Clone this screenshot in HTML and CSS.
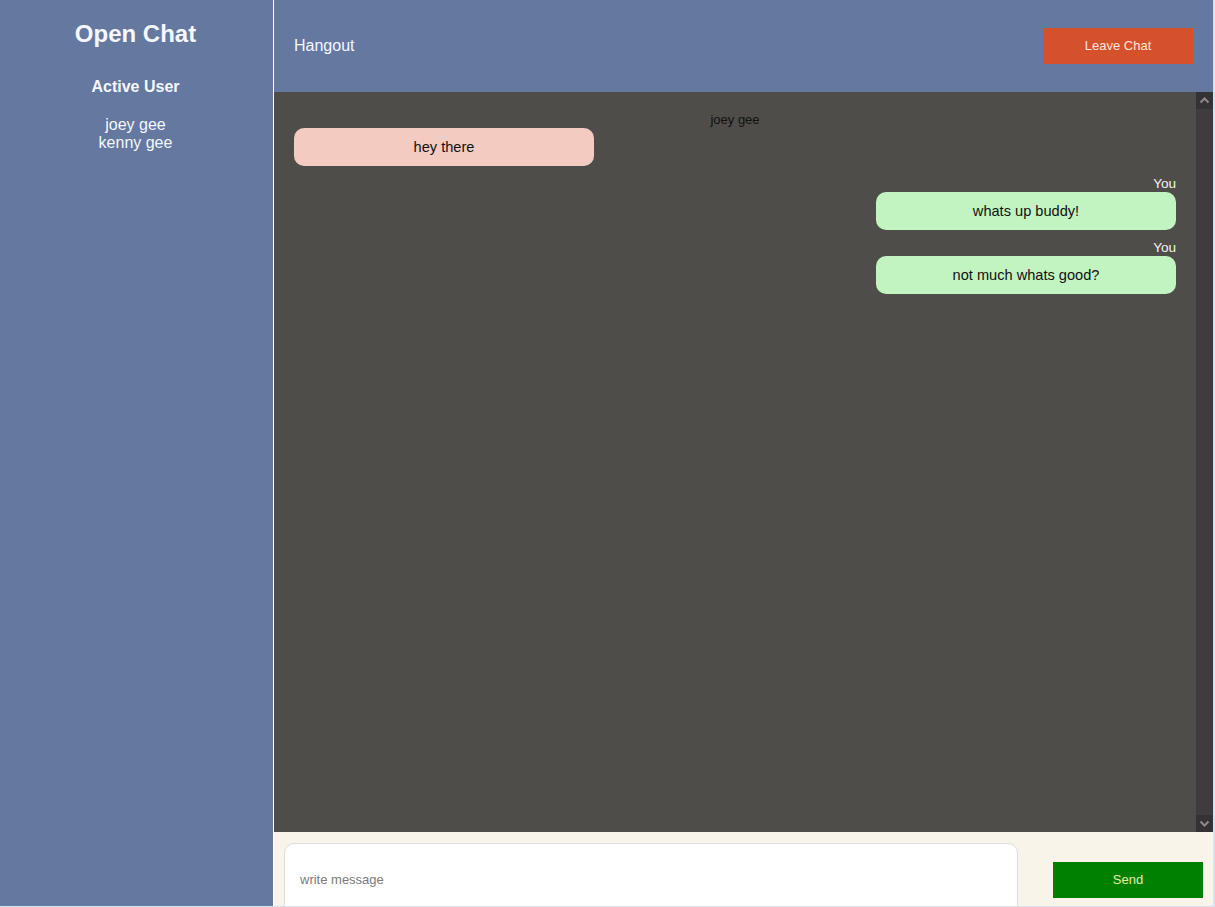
FILE: index.html
```html
<!DOCTYPE html>
<html>
<head>
<meta charset="utf-8">
<title>Open Chat</title>
<link rel="stylesheet" href="styles.css">
</head>
<body>
<div class="app">
  <aside class="sidebar">
    <h1 class="brand">Open Chat</h1>
    <h2 class="users-title">Active User</h2>
    <ul class="users">
      <li>joey gee</li>
      <li>kenny gee</li>
    </ul>
  </aside>
  <main class="main">
    <header class="header">
      <div class="room">Hangout</div>
      <button class="leave">Leave Chat</button>
    </header>
    <section class="messages-wrap">
      <div class="messages">
        <div class="msg msg-other">
          <div class="sender">joey gee</div>
          <div class="bubble bubble-other">hey there</div>
        </div>
        <div class="msg msg-self">
          <div class="sender sender-self">You</div>
          <div class="bubble bubble-self">whats up buddy!</div>
        </div>
        <div class="msg msg-self">
          <div class="sender sender-self">You</div>
          <div class="bubble bubble-self">not much whats good?</div>
        </div>
      </div>
      <div class="scrollbar">
        <div class="sb-btn">
          <svg width="17" height="17" viewBox="0 0 17 17"><path d="M4.5 10.5 L8.5 6.5 L12.5 10.5" fill="none" stroke="#8b8a8d" stroke-width="2"/></svg>
        </div>
        <div class="sb-track"></div>
        <div class="sb-btn">
          <svg width="17" height="17" viewBox="0 0 17 17"><path d="M4.5 6.5 L8.5 10.5 L12.5 6.5" fill="none" stroke="#8b8a8d" stroke-width="2"/></svg>
        </div>
      </div>
    </section>
    <footer class="composer">
      <div class="input-box">
        <textarea class="input" placeholder="write message"></textarea>
      </div>
      <button class="send">Send</button>
    </footer>
  </main>
</div>
</body>
</html>
```

FILE: styles.css
```css
html, body {
  margin: 0;
  padding: 0;
  height: 907px;
  overflow: hidden;
  background: #d3e4ef;
}
body {
  font-family: "Liberation Sans", Arial, sans-serif;
}
.app {
  display: flex;
  width: 1213px;
  height: 906px;
  overflow: hidden;
}
.sidebar {
  width: 274px;
  flex: 0 0 274px;
  background: #65789f;
  border-right: 1px solid #ffffff;
  color: #f4f7ff;
  text-align: center;
  padding-right: 2px;
  box-sizing: border-box;
}
.brand {
  margin: 20px 0 0;
  font-size: 24px;
  line-height: 28px;
  font-weight: bold;
}
.users-title {
  margin: 29px 0 0;
  font-size: 16px;
  line-height: 20px;
  font-weight: bold;
}
.users {
  list-style: none;
  margin: 19px 0 0;
  padding: 0;
  font-size: 16px;
  line-height: 18px;
}
.main {
  flex: 1;
  display: flex;
  flex-direction: column;
  min-width: 0;
}
.header {
  height: 92px;
  flex: 0 0 92px;
  background: #65789f;
  display: flex;
  align-items: center;
  justify-content: space-between;
  padding: 0 20px;
  box-sizing: border-box;
}
.room {
  color: #f4f7ff;
  font-size: 16px;
  line-height: 20px;
}
.leave {
  width: 150px;
  height: 36px;
  border: none;
  background: #d4512b;
  color: #fbe5dc;
  font-family: "Liberation Sans", Arial, sans-serif;
  font-size: 13px;
  margin-top: -1px;
  padding: 0;
}
.messages-wrap {
  flex: 1;
  display: flex;
  background: #4f4d4a;
  min-height: 0;
}
.messages {
  flex: 1;
  padding: 20px 20px 0;
  display: flex;
  flex-direction: column;
  gap: 10px;
}
.msg {
  display: flex;
  flex-direction: column;
}
.msg-other {
  align-items: flex-start;
}
.msg-self {
  align-items: flex-end;
}
.sender {
  align-self: stretch;
  text-align: center;
  font-size: 13px;
  line-height: 16px;
  color: #111;
}
.sender-self {
  text-align: right;
  color: #f4f4f4;
  font-size: 13.5px;
}
.bubble {
  width: 300px;
  height: 38px;
  line-height: 38px;
  border-radius: 10px;
  text-align: center;
  font-size: 14.6px;
  color: #111;
}
.bubble-other {
  background: #f4cbc1;
}
.bubble-self {
  background: #c2f4c2;
}
.scrollbar {
  width: 17px;
  flex: 0 0 17px;
  display: flex;
  flex-direction: column;
  background: #3e3c3f;
}
.sb-btn {
  height: 17px;
  background: #333235;
}
.sb-btn svg {
  display: block;
}
.sb-track {
  flex: 1;
}
.composer {
  height: 74px;
  flex: 0 0 74px;
  background: #f8f4ea;
  display: flex;
  align-items: flex-start;
  padding: 11px 10px 0 10px;
  box-sizing: border-box;
}
.input-box {
  width: 734px;
  height: 80px;
  flex: 0 0 734px;
}
.input {
  width: 100%;
  height: 100%;
  box-sizing: border-box;
  border: 1px solid #dcdcdc;
  border-radius: 10px;
  background: #ffffff;
  padding: 28px 15px 0;
  font-family: "Liberation Sans", Arial, sans-serif;
  font-size: 13px;
  line-height: 16px;
  resize: none;
  outline: none;
}
.input::placeholder {
  color: #7a7a7a;
}
.send {
  margin-left: 35px;
  margin-top: 19px;
  width: 150px;
  height: 36px;
  border: none;
  background: #008000;
  color: #e6eda8;
  font-family: "Liberation Sans", Arial, sans-serif;
  font-size: 13px;
  padding: 0 0 2px;
}
```
